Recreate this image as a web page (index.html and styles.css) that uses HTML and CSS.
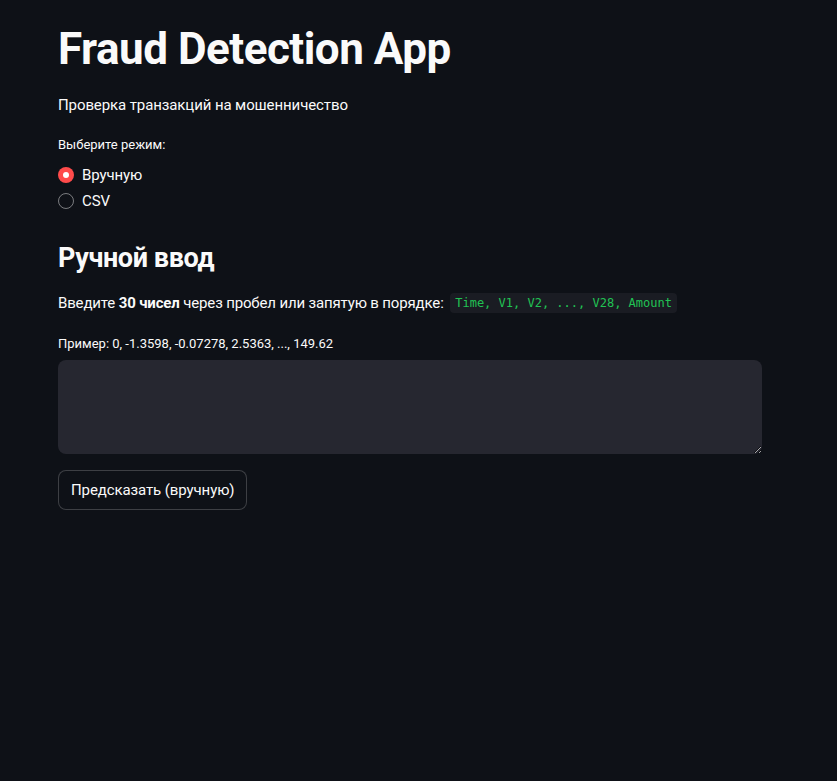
FILE: index.html
```html
<!DOCTYPE html>
<html lang="ru">
<head>
<meta charset="utf-8">
<link rel="stylesheet" href="styles.css">
</head>
<body>
<main class="main">
  <h1 class="title">Fraud Detection App</h1>
  <p class="text sub">Проверка транзакций на мошенничество</p>
  <div class="radio-group">
    <div class="label">Выберите режим:</div>
    <div class="radio-opt"><span class="radio on"></span><span>Вручную</span></div>
    <div class="radio-opt"><span class="radio"></span><span>CSV</span></div>
  </div>
  <h2 class="h2">Ручной ввод</h2>
  <p class="text intro">Введите <b>30 чисел</b> через пробел или запятую в порядке: <code class="code">Time, V1, V2, ..., V28, Amount</code></p>
  <div class="label ex">Пример: 0, -1.3598, -0.07278, 2.5363, ..., 149.62</div>
  <textarea class="area"></textarea>
  <button class="btn">Предсказать (вручную)</button>
</main>
</body>
</html>
```
FILE: styles.css
```css
html, body { margin: 0; padding: 0; background: #0e1117; }
body {
  color: #fafafa;
  font-family: Roboto, "Noto Sans", sans-serif;
  font-size: 16px;
  width: 837px;
  height: 781px;
  overflow: hidden;
}
.main {
  padding: 21px 75px 0 58px;
  display: flex;
  flex-direction: column;
  align-items: flex-start;
}
.title {
  margin: 0;
  font-size: 44px;
  font-weight: 700;
  line-height: 56px;
  letter-spacing: -0.5px;
}
.text { margin: 0; font-size: 15px; line-height: 24px; letter-spacing: -0.1px; }
.sub { margin-top: 16px; }
.radio-group { margin-top: 18px; display: flex; flex-direction: column; }
.label { font-size: 13px; line-height: 20px; letter-spacing: 0; }
.radio-group .label { margin-bottom: 7px; }
.radio-opt { display: flex; align-items: center; gap: 8px; height: 26px; font-size: 15px; letter-spacing: -0.1px; }
.radio {
  width: 16px; height: 16px; border-radius: 50%;
  box-sizing: border-box;
  border: 1px solid rgba(250,250,250,0.45);
}
.radio.on {
  background: #ff4b4b; border: none;
  display: flex; align-items: center; justify-content: center;
}
.radio.on::after { content: ""; width: 6px; height: 6px; border-radius: 50%; background: #fff; }
.h2 {
  margin: 26px 0 0;
  font-size: 27px;
  font-weight: 700;
  line-height: 36px;
  letter-spacing: -0.4px;
}
.intro { margin-top: 15px; display: flex; align-items: center; gap: 0; white-space: pre; letter-spacing: -0.15px; }
.intro b { font-weight: 700; }
.code {
  margin-left: 3px;
  font-family: "DejaVu Sans Mono", monospace;
  font-size: 12px;
  color: #21c354;
  background: #1a1c23;
  border-radius: 4px;
  padding: 2px 5px;
  line-height: 16px;
  letter-spacing: 0;
}
.ex { margin-top: 19px; }
.area {
  margin-top: 6px;
  width: 704px;
  height: 94px;
  box-sizing: border-box;
  background: #262730;
  border: none;
  border-radius: 8px;
  color: #fafafa;
  resize: vertical;
  outline: none;
  padding: 8px 12px;
}
.btn {
  margin-top: 16px;
  height: 40px;
  padding: 0 12px;
  background: #0e1117;
  border: 1px solid rgba(250,250,250,0.2);
  border-radius: 8px;
  color: #fafafa;
  font-family: Roboto, "Noto Sans", sans-serif;
  font-size: 15px;
  letter-spacing: -0.1px;
}
```
